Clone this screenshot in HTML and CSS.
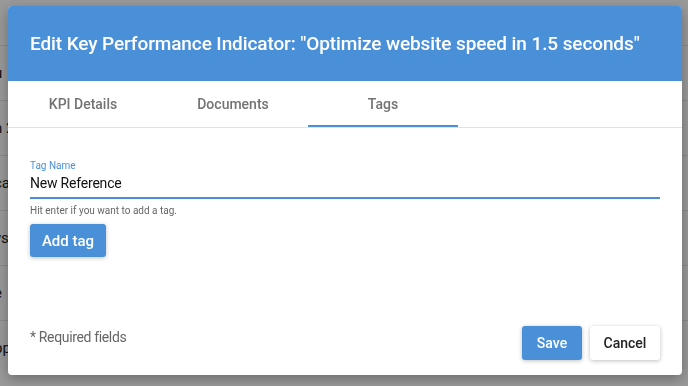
FILE: index.html
```html
<!DOCTYPE html>
<html lang="en">
<head>
    <meta charset="UTF-8">
    <meta name="viewport" content="width=device-width, initial-scale=1.0">
    <title>Edit Key Performance Indicator</title>
    <link rel="stylesheet" href="styles.css">
</head>
<body>

<div class="backdrop-list">
    <div class="bg-row"><span>u</span></div>
    <div class="bg-row"><span>n 2</span></div>
    <div class="bg-row"><span>ca</span></div>
    <div class="bg-row"><span>ys</span></div>
    <div class="bg-row"><span>e</span></div>
    <div class="bg-row"><span>pp</span></div>
</div>

<div class="overlay"></div>

<div class="modal">
    <div class="modal-header">
        <h1>Edit Key Performance Indicator: "Optimize website speed in 1.5 seconds"</h1>
    </div>

    <div class="tabs">
        <div class="tab">KPI Details</div>
        <div class="tab">Documents</div>
        <div class="tab active">Tags</div>
    </div>

    <div class="modal-body">
        <label class="field-label" for="tagName">Tag Name</label>
        <input class="field-input" type="text" id="tagName" value="New Reference">
        <p class="field-hint">Hit enter if you want to add a tag.</p>
        <button type="button" class="btn btn-primary">Add tag</button>
    </div>

    <div class="modal-footer">
        <p class="required">* Required fields</p>
        <div class="footer-actions">
            <button type="button" class="btn btn-primary btn-save">Save</button>
            <button type="button" class="btn btn-light">Cancel</button>
        </div>
    </div>
</div>

</body>
</html>
```

FILE: styles.css
```css
body, h1, p, button, input, label {
    margin: 0;
    padding: 0;
    font-family: Roboto, "Liberation Sans", sans-serif;
    box-sizing: border-box;
}

body {
    background-color: #ffffff;
    width: 688px;
    height: 386px;
    overflow: hidden;
}

/* page behind the dialog */
.backdrop-list {
    padding-top: 45px;
}

.bg-row {
    height: 54px;
    border-top: 1px solid #e6e6e6;
    display: flex;
    align-items: center;
    font-size: 15px;
    color: #222;
    text-indent: -6px;
}

.overlay {
    position: fixed;
    inset: 0;
    background-color: rgba(0, 0, 0, 0.4);
}

.modal {
    position: fixed;
    left: 8px;
    top: 6px;
    width: 674px;
    height: 369px;
    background: white;
    border-radius: 4px;
    box-shadow: 0 4px 14px rgba(0, 0, 0, 0.3);
    display: flex;
    flex-direction: column;
    overflow: hidden;
}

.modal-header {
    background-color: #4a90d9;
    height: 75px;
    display: flex;
    align-items: center;
    padding: 0 22px;
}

.modal-header h1 {
    color: white;
    font-size: 19px;
    font-weight: 500;
    letter-spacing: -0.1px;
}

.tabs {
    display: flex;
    height: 46px;
    border-bottom: 1px solid #e2e2e2;
}

.tab {
    width: 150px;
    display: flex;
    align-items: center;
    justify-content: center;
    font-size: 14px;
    font-weight: 500;
    color: #737373;
    border-bottom: 2px solid transparent;
    padding-top: 1px;
}

.tab.active {
    border-bottom-color: #4a90d9;
}

.modal-body {
    flex: 1;
    padding: 31px 22px 0;
}

.field-label {
    display: block;
    font-size: 10px;
    color: #4a90d9;
    line-height: 13px;
}

.field-input {
    display: block;
    width: 100%;
    border: none;
    border-bottom: 2px solid #4a90d9;
    outline: none;
    font-size: 14px;
    letter-spacing: -0.2px;
    color: #111;
    height: 27px;
    padding: 0 0 3px;
    background: transparent;
}

.field-hint {
    font-size: 10px;
    color: #666;
    margin-top: 5px;
    line-height: 13px;
}

.btn {
    border: none;
    border-radius: 3px;
    font-size: 14px;
    font-weight: 500;
    cursor: pointer;
    height: 34px;
}

.btn-primary {
    background-color: #4a90d9;
    color: white;
    box-shadow: 0 1px 4px rgba(0, 0, 0, 0.25);
}

.modal-body .btn-primary {
    margin-top: 7px;
    width: 76px;
    height: 33px;
    font-size: 15px;
}

.btn-light {
    background-color: white;
    color: #222;
    width: 70px;
    box-shadow: 0 1px 4px rgba(0, 0, 0, 0.25);
}

.btn-save {
    width: 60px;
}

.modal-footer {
    display: flex;
    justify-content: space-between;
    align-items: center;
    padding: 0 22px 15px;
}

.required {
    font-size: 14px;
    letter-spacing: -0.35px;
    color: #666;
    margin-top: -12px;
}

.footer-actions {
    display: flex;
    gap: 8px;
}
```
